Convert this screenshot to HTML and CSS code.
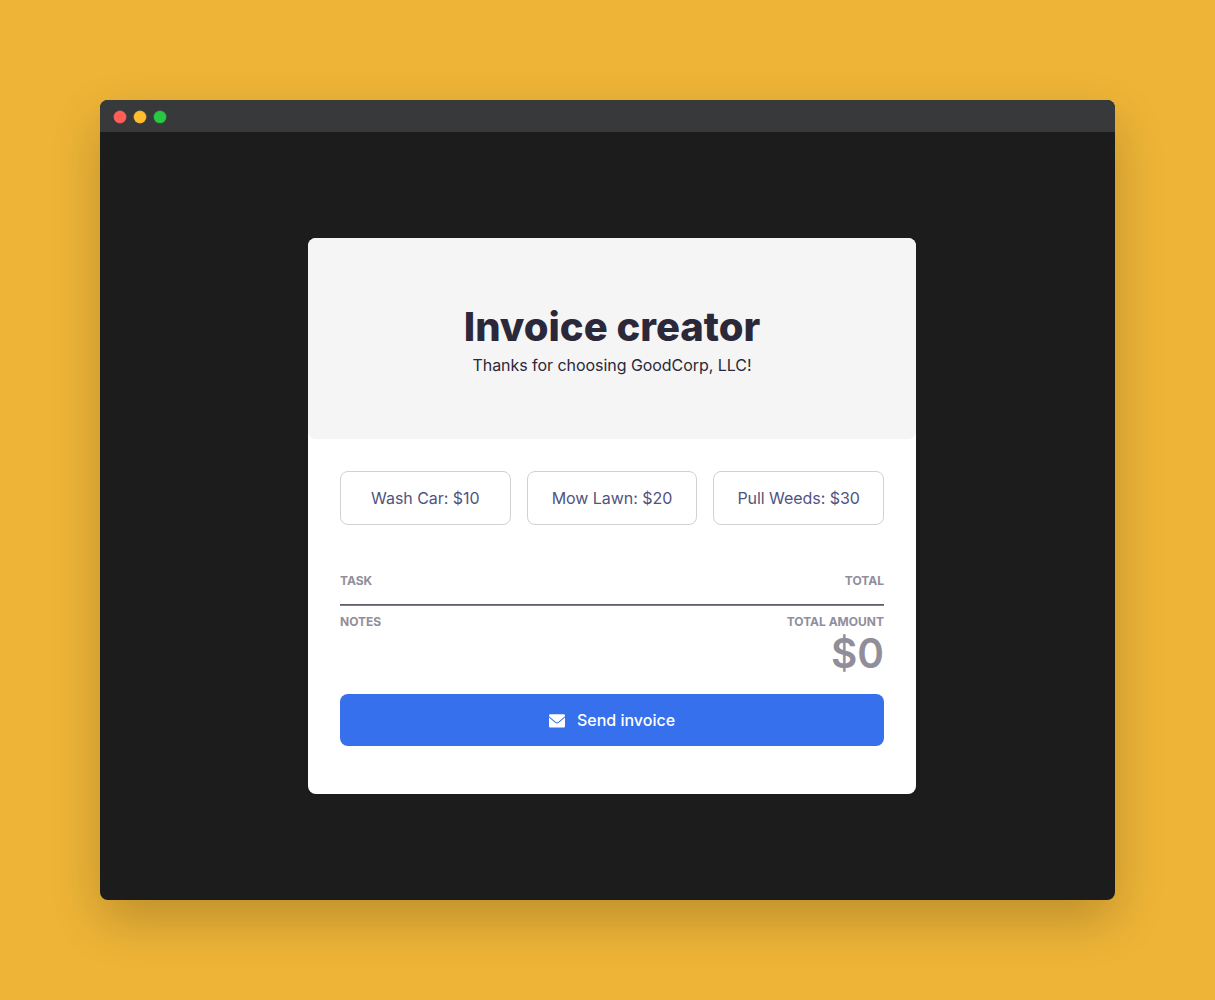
FILE: index.html
```html
<!DOCTYPE html>
<html lang="en">
<head>
<meta charset="utf-8">
<title>Invoice creator</title>
<link rel="stylesheet" href="styles.css">
</head>
<body>
<div class="window">
  <div class="titlebar">
    <span class="dot close"></span>
    <span class="dot minimize"></span>
    <span class="dot maximize"></span>
  </div>
  <div class="viewport">
    <main class="card">
      <header class="hero">
        <h1>Invoice creator</h1>
        <p>Thanks for choosing GoodCorp, LLC!</p>
      </header>
      <div class="content">
        <div class="services">
          <button class="service">Wash Car: $10</button>
          <button class="service">Mow Lawn: $20</button>
          <button class="service">Pull Weeds: $30</button>
        </div>
        <div class="row tasks">
          <span class="label">TASK</span>
          <span class="label">TOTAL</span>
        </div>
        <div class="row summary">
          <span class="label">NOTES</span>
          <div class="total">
            <span class="label">TOTAL AMOUNT</span>
            <span class="amount">$0</span>
          </div>
        </div>
        <button class="send">
          <svg class="envelope" viewBox="0 0 16 16" aria-hidden="true">
            <path d="M1.300 2.200h13.400A1.300 1.300 0 0 1 16 3.500v.7L9.200 9.900a1.900 1.900 0 0 1-2.400 0L0 4.200v-.7A1.300 1.300 0 0 1 1.300 2.200z"/>
            <path d="M0 5.500l6.200 5.200a2.800 2.800 0 0 0 3.600 0L16 5.500v8.700a1.200 1.200 0 0 1-1.200 1.200H1.200A1.200 1.200 0 0 1 0 14.200z"/>
          </svg>
          <span>Send invoice</span>
        </button>
      </div>
    </main>
  </div>
</div>
</body>
</html>
```
FILE: styles.css
```css
* { box-sizing: border-box; }
body {
  margin: 0;
  padding: 100px;
  height: 1000px;
  background: #edb437;
  font-family: Inter, "Liberation Sans", sans-serif;
  color: #2b283a;
}
h1, p { margin: 0; }
button { font-family: inherit; padding: 0; }
.window {
  height: 800px;
  border-radius: 8px;
  background: #1c1c1c;
  box-shadow: 0 20px 50px rgba(0, 0, 0, .2);
}
.titlebar {
  display: flex;
  gap: 8px;
  height: 32px;
  padding: 11px 14px;
  border-radius: 8px 8px 0 0;
  background: #38393a;
}
.dot { width: 12px; height: 12px; border-radius: 50%; }
.close { background: #ff5f57; box-shadow: 0 0 0 .5px #c95651; }
.minimize { background: #febc2e; box-shadow: 0 0 0 .5px #c49435; }
.maximize { background: #28c840; box-shadow: 0 0 0 .5px #2d9a3e; }
.viewport { padding: 106px 199px 106px 208px; }
.card {
  height: 556px;
  border-radius: 8px;
  background: #fff;
}
.hero {
  height: 201px;
  padding-top: 64px;
  border-radius: 8px;
  background: #f5f5f5;
  text-align: center;
}
.hero h1 { font-size: 40px; line-height: 50px; font-weight: 800; }
.hero p { font-size: 16px; line-height: 26px; letter-spacing: -.05px; }
.content { padding: 32px; }
.services { display: grid; grid-template-columns: repeat(3, 1fr); gap: 16px; }
.service {
  height: 54px;
  border: 1px solid #d1d1d1;
  border-radius: 8px;
  background: #fff;
  color: #4f547f;
  font-size: 16px;
  letter-spacing: -.04px;
}
.row { display: flex; justify-content: space-between; }
.tasks {
  height: 80px;
  padding-top: 48px;
  border-bottom: 1px solid #605c6b;
}
.label { font-size: 12px; line-height: 16px; font-weight: 700; color: #918e9b; }
.summary { height: 89px; padding-top: 8px; border-top: 1px solid #817e8b; }
.total { display: flex; flex-direction: column; align-items: flex-end; }
.amount { font-size: 40.5px; line-height: 48px; font-weight: 600; color: #918e9b; }
.send {
  display: flex;
  align-items: center;
  justify-content: center;
  gap: 12px;
  width: 100%;
  height: 52px;
  border: 0;
  border-radius: 8px;
  background: #3770ed;
  color: #fff;
  font-size: 16px;
  font-weight: 500;
}
.envelope { width: 16px; height: 16px; fill: currentColor; }
```
